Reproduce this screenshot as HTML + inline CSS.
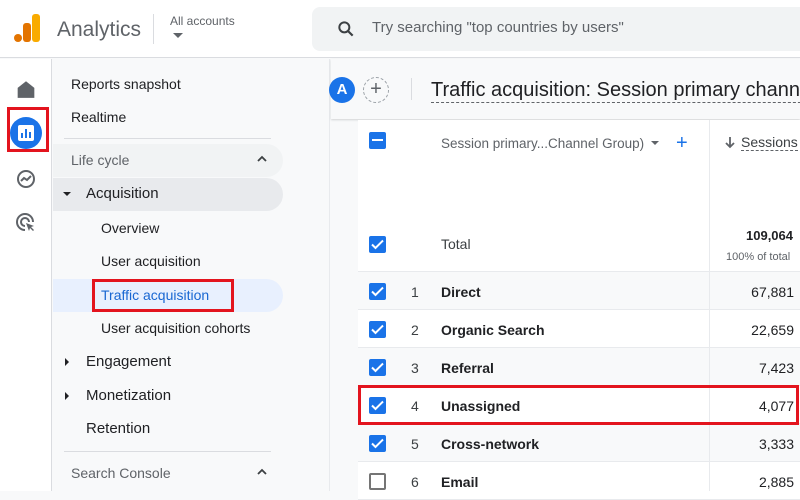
<!DOCTYPE html>
<html><head><meta charset="utf-8"><style>
*{margin:0;padding:0;box-sizing:border-box}
body{width:800px;height:491px;overflow:hidden;position:relative;background:#f8f9fa;font-family:"Liberation Sans",Arial,sans-serif;color:#202124}
.a{position:absolute}
.t{position:absolute;font-size:14px;white-space:nowrap;line-height:16px}
.cb{position:absolute;width:17px;height:17px;border-radius:2px;background:#1a73e8}
.cb svg{position:absolute;left:2px;top:3px}
.row{position:absolute;left:358px;width:442px;height:38px;border-bottom:1px solid #e8eaed}
</style></head><body>
<!-- header -->
<div class="a" style="left:0;top:0;width:800px;height:58px;background:#fff;border-bottom:1px solid #dadce0"></div>
<div class="a" style="left:14px;top:34px;width:8px;height:8px;border-radius:50%;background:#e37400"></div>
<div class="a" style="left:23px;top:23px;width:8px;height:19px;border-radius:3px;background:#e37400"></div>
<div class="a" style="left:32px;top:14px;width:8px;height:28px;border-radius:3px;background:#f9ab00"></div>
<div class="t" style="left:57px;top:18px;font-size:21px;line-height:24px;color:#5f6368">Analytics</div>
<div class="a" style="left:153px;top:14px;width:1px;height:30px;background:#dadce0"></div>
<div class="t" style="left:170px;top:13px;font-size:12px;color:#5f6368">All accounts</div>
<div class="a" style="left:173px;top:33px;border:5px solid transparent;border-top:5px solid #5f6368"></div>
<div class="a" style="left:312px;top:7px;width:488px;height:44px;border-radius:8px 0 0 8px;background:#f1f3f4"></div>
<svg class="a" style="left:336px;top:19px" width="20" height="20" viewBox="0 0 24 24"><circle cx="10" cy="10" r="6" fill="none" stroke="#3c4043" stroke-width="2.4"/><path d="M14.5 14.5L20 20" stroke="#3c4043" stroke-width="2.6"/></svg>
<div class="t" style="left:372px;top:20px;font-size:15px;color:#5f6368">Try searching "top countries by users"</div>
<!-- left rail -->
<div class="a" style="left:0;top:59px;width:52px;height:432px;background:#fff;border-right:1px solid #dadce0"></div>
<svg class="a" style="left:16px;top:79px" width="20" height="20" viewBox="0 0 18 18"><path d="M1.5 8L9 2l7.5 6v9h-15z" fill="#5f6368"/></svg>
<div class="a" style="left:10px;top:117px;width:32px;height:32px;border-radius:50%;background:#1a73e8"></div>
<div class="a" style="left:18px;top:125px;width:16px;height:16px;border-radius:2px;background:#fff"></div>
<div class="a" style="left:21px;top:133px;width:2px;height:5px;background:#1a73e8"></div>
<div class="a" style="left:25px;top:129px;width:2px;height:9px;background:#1a73e8"></div>
<div class="a" style="left:29px;top:132px;width:2px;height:6px;background:#1a73e8"></div>
<div class="a" style="left:7px;top:107px;width:42px;height:45px;border:3px solid #e3141e"></div>
<svg class="a" style="left:16px;top:169px" width="20" height="20" viewBox="0 0 20 20"><circle cx="10" cy="10" r="8" fill="none" stroke="#5f6368" stroke-width="2"/><path d="M5 12l3-3 3 2 4-4" fill="none" stroke="#5f6368" stroke-width="2"/></svg>
<svg class="a" style="left:16px;top:213px" width="20" height="20" viewBox="0 0 20 20"><path d="M9 17A8 8 0 1 1 17 9" fill="none" stroke="#5f6368" stroke-width="2"/><path d="M9 13A4 4 0 1 1 13 9" fill="none" stroke="#5f6368" stroke-width="2"/><path d="M10 10l8 3-3 1 3 3-1 1-3-3-1 3z" fill="#5f6368"/></svg>
<!-- nav -->
<div class="a" style="left:53px;top:59px;width:277px;height:432px;background:#f8f9fa;border-right:1px solid #e8eaed"></div>
<div class="t" style="left:71px;top:76px">Reports snapshot</div>
<div class="t" style="left:71px;top:109px">Realtime</div>
<div class="a" style="left:64px;top:138px;width:207px;height:1px;background:#dadce0"></div>
<div class="a" style="left:53px;top:144px;width:230px;height:33px;border-radius:0 17px 17px 0;background:#f1f3f4"></div>
<div class="t" style="left:71px;top:152px;color:#5f6368">Life cycle</div>
<svg class="a" style="left:256px;top:155px" width="12" height="8" viewBox="0 0 12 8"><path d="M2 6l4-4 4 4" fill="none" stroke="#3c4043" stroke-width="1.8"/></svg>
<div class="a" style="left:53px;top:178px;width:230px;height:33px;border-radius:0 17px 17px 0;background:#e8eaed"></div>
<div class="a" style="left:63px;top:192px;border:4px solid transparent;border-top:4px solid #202124"></div>
<div class="t" style="left:86px;top:186px;font-size:15px">Acquisition</div>
<div class="t" style="left:101px;top:220px">Overview</div>
<div class="t" style="left:101px;top:253px">User acquisition</div>
<div class="a" style="left:53px;top:279px;width:230px;height:33px;border-radius:0 17px 17px 0;background:#e8f0fe"></div>
<div class="t" style="left:101px;top:287px;color:#1967d2">Traffic acquisition</div>
<div class="a" style="left:92px;top:279px;width:142px;height:33px;border:3px solid #e3141e"></div>
<div class="t" style="left:101px;top:320px">User acquisition cohorts</div>
<div class="a" style="left:65px;top:358px;border:4px solid transparent;border-left:4px solid #202124"></div>
<div class="t" style="left:86px;top:354px;font-size:15px">Engagement</div>
<div class="a" style="left:65px;top:392px;border:4px solid transparent;border-left:4px solid #202124"></div>
<div class="t" style="left:86px;top:388px;font-size:15px">Monetization</div>
<div class="t" style="left:86px;top:421px;font-size:15px">Retention</div>
<div class="a" style="left:64px;top:451px;width:207px;height:1px;background:#dadce0"></div>
<div class="t" style="left:71px;top:465px;color:#5f6368">Search Console</div>
<svg class="a" style="left:256px;top:468px" width="12" height="8" viewBox="0 0 12 8"><path d="M2 6l4-4 4 4" fill="none" stroke="#3c4043" stroke-width="1.8"/></svg>
<!-- main top bar -->
<div class="a" style="left:331px;top:59px;width:469px;height:60px;background:#f8f9fa;box-shadow:0 1px 2px rgba(60,64,67,.2)"></div>
<div class="a" style="left:329px;top:77px;width:26px;height:26px;border-radius:50%;background:#1a73e8;color:#fff;font-weight:bold;font-size:15px;text-align:center;line-height:26px">A</div>
<div class="a" style="left:363px;top:77px;width:26px;height:26px;border-radius:50%;border:1px dashed #9aa0a6;color:#5f6368;font-size:20px;text-align:center;line-height:23px">+</div>
<div class="a" style="left:411px;top:78px;width:1px;height:22px;background:#dadce0"></div>
<div class="t" style="left:431px;top:78px;font-size:20px;line-height:24px;border-bottom:1px dashed #5f6368">Traffic acquisition: Session primary channel</div>
<!-- table -->
<div class="a" style="left:358px;top:120px;width:442px;height:371px;background:#fff"></div>
<div class="a" style="left:709px;top:120px;width:1px;height:371px;background:#e8eaed"></div>
<div class="cb" style="left:369px;top:132px"><div style="position:absolute;left:3px;top:7px;width:11px;height:2px;background:#fff"></div></div>
<div class="t" style="left:441px;top:136px;font-size:13.5px;color:#5f6368">Session primary...Channel Group)</div>
<div class="a" style="left:651px;top:141px;border:4px solid transparent;border-top:4px solid #5f6368"></div>
<div class="t" style="left:676px;top:132px;font-size:20px;line-height:22px;color:#1a73e8">+</div>
<svg class="a" style="left:724px;top:136px" width="12" height="13" viewBox="0 0 12 13"><path d="M6 1v10M2 7l4 4 4-4" fill="none" stroke="#5f6368" stroke-width="1.8"/></svg>
<div class="t" style="left:741px;top:134px;color:#3c4043;border-bottom:1px dashed #5f6368">Sessions</div>
<div class="cb" style="left:369px;top:236px"><svg width="13" height="11" viewBox="0 0 13 11"><path d="M1 5.5l3.5 3.5L12 1.5" fill="none" stroke="#fff" stroke-width="2"/></svg></div>
<div class="t" style="left:441px;top:236px;color:#3c4043">Total</div>
<div class="t" style="left:746px;top:228px;font-size:13px;font-weight:bold">109,064</div>
<div class="t" style="left:726px;top:249px;font-size:11px;color:#5f6368">100% of total</div>
<div class="a" style="left:358px;top:271px;width:442px;height:1px;background:#e8eaed"></div>

<div class="row" style="top:272px;background:#f8f9fa"></div>
<div class="row" style="top:310px;background:#fff"></div>
<div class="row" style="top:348px;background:#f8f9fa"></div>
<div class="row" style="top:386px;background:#fff"></div>
<div class="row" style="top:424px;background:#f8f9fa"></div>
<div class="row" style="top:462px;background:#fff"></div>
<div class="a" style="left:709px;top:272px;width:1px;height:219px;background:#e8eaed"></div>

<div class="cb" style="left:369px;top:283px"><svg width="13" height="11" viewBox="0 0 13 11"><path d="M1 5.5l3.5 3.5L12 1.5" fill="none" stroke="#fff" stroke-width="2"/></svg></div>
<div class="t" style="left:411px;top:284px;color:#3c4043">1</div><div class="t" style="left:441px;top:284px;font-weight:bold;color:#202124">Direct</div><div class="t" style="right:6px;top:284px">67,881</div>
<div class="cb" style="left:369px;top:321px"><svg width="13" height="11" viewBox="0 0 13 11"><path d="M1 5.5l3.5 3.5L12 1.5" fill="none" stroke="#fff" stroke-width="2"/></svg></div>
<div class="t" style="left:411px;top:322px;color:#3c4043">2</div><div class="t" style="left:441px;top:322px;font-weight:bold">Organic Search</div><div class="t" style="right:6px;top:322px">22,659</div>
<div class="cb" style="left:369px;top:359px"><svg width="13" height="11" viewBox="0 0 13 11"><path d="M1 5.5l3.5 3.5L12 1.5" fill="none" stroke="#fff" stroke-width="2"/></svg></div>
<div class="t" style="left:411px;top:360px;color:#3c4043">3</div><div class="t" style="left:441px;top:360px;font-weight:bold">Referral</div><div class="t" style="right:6px;top:360px">7,423</div>
<div class="cb" style="left:369px;top:397px"><svg width="13" height="11" viewBox="0 0 13 11"><path d="M1 5.5l3.5 3.5L12 1.5" fill="none" stroke="#fff" stroke-width="2"/></svg></div>
<div class="t" style="left:411px;top:398px;color:#3c4043">4</div><div class="t" style="left:441px;top:398px;font-weight:bold">Unassigned</div><div class="t" style="right:6px;top:398px">4,077</div>
<div class="cb" style="left:369px;top:435px"><svg width="13" height="11" viewBox="0 0 13 11"><path d="M1 5.5l3.5 3.5L12 1.5" fill="none" stroke="#fff" stroke-width="2"/></svg></div>
<div class="t" style="left:411px;top:436px;color:#3c4043">5</div><div class="t" style="left:441px;top:436px;font-weight:bold">Cross-network</div><div class="t" style="right:6px;top:436px">3,333</div>
<div class="a" style="left:369px;top:473px;width:17px;height:17px;border:2px solid #757575;border-radius:2px;background:#fff"></div>
<div class="t" style="left:411px;top:474px;color:#3c4043">6</div><div class="t" style="left:441px;top:474px;font-weight:bold">Email</div><div class="t" style="right:6px;top:474px">2,885</div>

<div class="a" style="left:358px;top:385px;width:441px;height:40px;border:3px solid #e3141e"></div>
</body></html>
